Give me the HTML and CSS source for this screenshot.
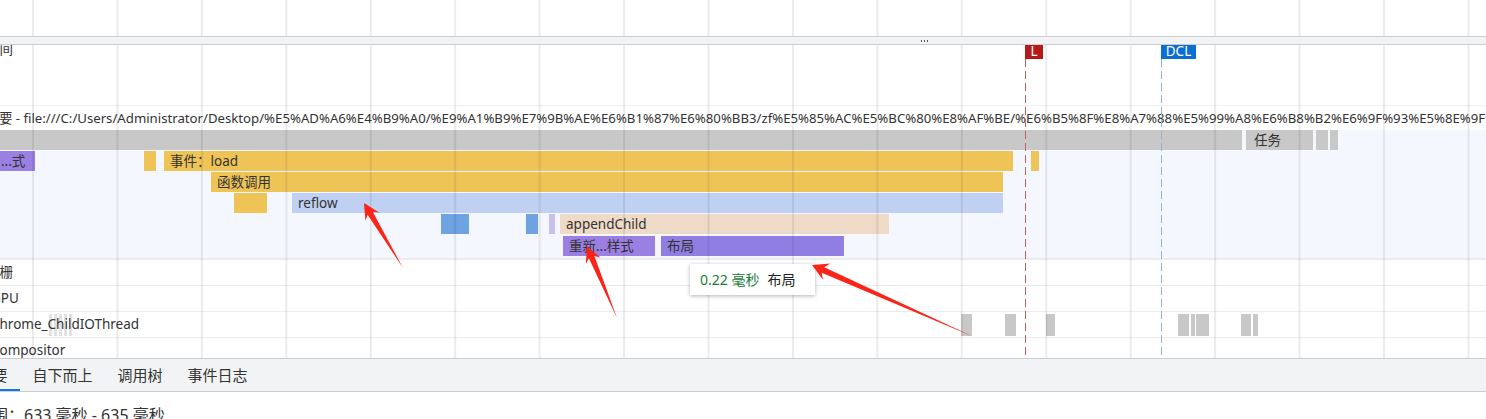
FILE: index.html
```html
<!DOCTYPE html>
<html>
<head>
	<meta charset="utf-8">
	<title>Performance</title>
	<link rel="stylesheet" href="styles.css">
</head>
<body>
	<div class="timeline">
		<div class="ruler"></div>
		<div class="overview"><span class="dots"></span></div>
		<div class="timings">
			<div class="track-label timings-label">时间</div>
			<span class="marker marker-load">L</span>
			<span class="marker marker-dcl">DCL</span>
		</div>
		<div class="main-header">主要 - file:///C:/Users/Administrator/Desktop/%E5%AD%A6%E4%B9%A0/%E9%A1%B9%E7%9B%AE%E6%B1%87%E6%80%BB3/zf%E5%85%AC%E5%BC%80%E8%AF%BE/%E6%B5%8F%E8%A7%88%E5%99%A8%E6%B8%B2%E6%9F%93%E5%8E%9F%E7%90%86/index.html</div>
		<div class="task-row">
			<span class="bar task" style="left:0;width:1242px"></span>
			<span class="bar task" style="left:1246px;width:67px">任务</span>
			<span class="bar task" style="left:1316px;width:12px"></span>
			<span class="bar task" style="left:1330px;width:3px"></span>
		</div>
		<div class="flame">
			<span class="bar style row-1 clipped" style="left:0;width:35px">...式</span>
			<span class="bar script row-1" style="left:144px;width:12px"></span>
			<span class="bar script row-1" style="left:164px;width:849px">事件：load</span>
			<span class="bar script row-1" style="left:1031px;width:8px"></span>

			<span class="bar script row-2" style="left:211px;width:792px">函数调用</span>

			<span class="bar script row-3" style="left:234px;width:33px"></span>
			<span class="bar reflow row-3" style="left:292px;width:711px">reflow</span>

			<span class="bar native row-4" style="left:441px;width:28px"></span>
			<span class="bar native row-4" style="left:526px;width:12px"></span>
			<span class="bar thin row-4" style="left:549px;width:1px"></span>
			<span class="bar dom row-4" style="left:560px;width:329px">appendChild</span>

			<span class="bar style row-5" style="left:563px;width:92px">重新...样式</span>
			<span class="bar layout row-5" style="left:661px;width:183px">布局</span>
		</div>
		<div class="thread"><span class="track-label raster-label">光栅</span></div>
		<div class="thread"><span class="track-label">GPU</span></div>
		<div class="thread">
			<span class="slice faint" style="left:49px;width:25px"></span>
			<span class="track-label">Chrome_ChildIOThread</span>
			<span class="slice" style="left:961px;width:11px"></span>
			<span class="slice" style="left:1005px;width:11px"></span>
			<span class="slice" style="left:1046px;width:9px"></span>
			<span class="slice" style="left:1178px;width:11px"></span>
			<span class="slice" style="left:1191px;width:4px"></span>
			<span class="slice" style="left:1196px;width:13px"></span>
			<span class="slice" style="left:1241px;width:10px"></span>
			<span class="slice" style="left:1253px;width:5px"></span>
		</div>
		<div class="thread"><span class="track-label">Compositor</span></div>

		<div class="grid"></div>
		<div class="dash dash-load"></div>
		<div class="dash dash-dcl"></div>

		<div class="tooltip"><span class="tip-time">0.22 毫秒</span><span class="tip-name">布局</span></div>

		<svg class="arrows" width="1486" height="358" viewBox="0 0 1486 358">
			<polygon points="403,268 372.7,211.7 379.1,212.6 364,203 365.4,220.8 367.6,214.8" />
			<polygon points="617,318 594.4,255.9 600.5,257.7 587,246 585.8,263.9 588.9,258.2" />
			<polygon points="974,337 824.2,267.2 830.3,263.4 812,265 822.9,279.8 821.7,272.7" />
		</svg>
	</div>

	<div class="tabs">
		<span class="tab tab-active">摘要</span>
		<span class="tab">自下而上</span>
		<span class="tab">调用树</span>
		<span class="tab">事件日志</span>
	</div>
	<div class="summary">范围：633 毫秒 - 635 毫秒</div>
</body>
</html>
```

FILE: styles.css
```css
body {
	margin: 0;
	width: 1486px;
	height: 419px;
	overflow: hidden;
	background-color: #fff;
	color: #333;
	font-family: "Noto Sans", "Noto Sans CJK SC", sans-serif;
}

.timeline {
	position: relative;
	height: 358px;
	overflow: hidden;
}

.ruler {
	height: 36px;
}

.overview {
	position: relative;
	z-index: 3;
	height: 7px;
	background-color: #f1f3f4;
	border-top: 1px solid #cacdd1;
	border-bottom: 1px solid #cacdd1;
}

.dots {
	position: absolute;
	left: 920px;
	top: 3px;
	width: 9px;
	height: 2px;
	background: radial-gradient(circle, #555 0.9px, transparent 1.1px) 0 0 / 3px 2px repeat-x;
}

.track-label {
	position: relative;
	z-index: 1;
	display: block;
	font-size: 13.5px;
	line-height: 25px;
	white-space: nowrap;
	text-indent: -9px;
}

.timings {
	display: flow-root;
	position: relative;
	height: 60px;
}

.timings-label {
	line-height: 16px;
	margin-top: -4px;
	text-indent: -14px;
}

.raster-label {
	text-indent: -14px;
}

.marker {
	position: absolute;
	top: 0;
	height: 14px;
	color: #fff;
	font-size: 13.5px;
	line-height: 12px;
	text-align: center;
	overflow: hidden;
}

.marker-load {
	left: 1025px;
	width: 18px;
	background-color: #b71818;
}

.marker-dcl {
	left: 1161px;
	width: 35px;
	background-color: #0b6ed2;
}

.main-header {
	height: 24px;
	border-top: 1px solid #eef0f2;
	font-size: 13.2px;
	line-height: 25px;
	white-space: nowrap;
	overflow: hidden;
	text-indent: -14px;
}

.task-row {
	position: relative;
	height: 20px;
	background-color: #f4f8fe;
}

.flame {
	position: relative;
	height: 108px;
	background-color: #f4f8fe;
	border-bottom: 2px solid #ececec;
}

.bar {
	position: absolute;
	box-sizing: border-box;
	height: 20px;
	padding-left: 6px;
	font-size: 13.5px;
	line-height: 20px;
	white-space: nowrap;
	overflow: hidden;
	color: #333;
}

.bar.clipped {
	padding-left: 1px;
}

.task {
	top: 0;
	background-color: #c8c8c8;
	padding-left: 8px;
}

.row-1 { top: 1px; }
.row-2 { top: 22px; }
.row-3 { top: 43px; }
.row-4 { top: 64px; }
.row-5 { top: 86px; }

.script {
	background-color: #efc457;
}

.reflow {
	background-color: #c0d0f2;
}

.native {
	background-color: #6fa2e1;
}

.thin {
	background-color: #c8c0f0;
}

.dom {
	background-color: #eedac6;
}

.style {
	background-color: #9b80e4;
}

.layout {
	background-color: #907ee2;
}

.thread {
	position: relative;
	height: 25px;
	border-bottom: 1px solid #ebebeb;
}

.slice {
	position: absolute;
	top: 2px;
	height: 22px;
	background-color: #c8c8c8;
}

.slice.faint {
	background: repeating-linear-gradient(to right, #e2e2e2 0 3px, transparent 3px 5px);
}

.grid {
	position: absolute;
	left: 0;
	top: 0;
	width: 1486px;
	height: 358px;
	z-index: 2;
	pointer-events: none;
	background: linear-gradient(to right, rgba(0, 0, 0, 0.08) 2px, transparent 2px) 32px 0 / 84.45px 100% repeat-x;
}

.dash {
	position: absolute;
	top: 59px;
	width: 1px;
	height: 299px;
	z-index: 2;
}

.dash-load {
	left: 1025px;
	background: repeating-linear-gradient(to bottom, #c86060 0 8px, transparent 8px 12px);
}

.dash-dcl {
	left: 1161px;
	background: repeating-linear-gradient(to bottom, #8ab4e6 0 8px, transparent 8px 12px);
}

.tooltip {
	position: absolute;
	left: 690px;
	top: 264px;
	z-index: 4;
	box-sizing: border-box;
	width: 125px;
	height: 31px;
	padding-left: 10px;
	background-color: #fff;
	box-shadow: 0 1px 4px rgba(0, 0, 0, 0.3);
	font-size: 14px;
	line-height: 31px;
	white-space: nowrap;
}

.tip-time {
	color: #188038;
	margin-right: 8px;
}

.tip-name {
	color: #222;
}

.arrows {
	position: absolute;
	left: 0;
	top: 0;
	z-index: 5;
	pointer-events: none;
	fill: #fa2418;
}

.tabs {
	display: flex;
	height: 32px;
	background-color: #f1f3f4;
	border-top: 1px solid #cacdd1;
	border-bottom: 1px solid #cacdd1;
}

.tab {
	box-sizing: border-box;
	height: 32px;
	padding: 0 12.5px;
	border-bottom: 2px solid transparent;
	font-size: 15px;
	line-height: 32px;
	color: #333;
	white-space: nowrap;
}

.tab-active {
	margin-left: -35px;
	border-bottom-color: #1a73e8;
}

.summary {
	padding-top: 13px;
	font-size: 16px;
	line-height: 20px;
	white-space: nowrap;
	text-indent: -24px;
	color: #333;
}
```
